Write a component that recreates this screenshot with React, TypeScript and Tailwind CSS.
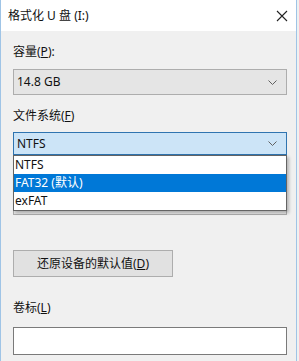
import React from 'react'

const FONT = '[font-family:"Noto_Sans","Noto_Sans_CJK_SC",sans-serif]'

function Chevron({ className }: { className?: string }) {
  return (
    <svg width="9" height="5" viewBox="0 0 9 5" className={className} fill="none">
      <path d="M0.5 0.5 L4.5 4.5 L8.5 0.5" stroke="currentColor" strokeWidth="1" />
    </svg>
  )
}

function Combo({ value, active }: { value: string; active?: boolean }) {
  return (
    <div
      className={
        active
          ? 'flex h-[23px] items-center justify-between border border-[#2f74b0] bg-[#cce4f7] pl-[3px] pr-[9px]'
          : 'flex h-[26px] items-center justify-between border border-[#adadad] bg-[#e5e5e5] pl-[3px] pr-[9px]'
      }
    >
      <span className="text-[12px] leading-none text-[#111]">{value}</span>
      <Chevron className="text-[#606060]" />
    </div>
  )
}

const OPTIONS = ['NTFS', 'FAT32 (默认)', 'exFAT']

export default function App() {
  return (
    <div className={`${FONT} relative h-[361px] w-[299px] overflow-hidden bg-[#f0f0f0]`}>
      <div className="mr-[2px] h-full border-l border-r border-[#9fc4e6]">
        {/* Title bar */}
        <div className="flex h-[31px] items-center justify-between bg-white pl-[7px] pr-[8px]">
          <span className="text-[12px] text-[#111]">格式化 U 盘 (I:)</span>
          <svg width="12" height="12" viewBox="0 0 12 12" className="text-[#222]">
            <path d="M1 1 L11 11 M11 1 L1 11" stroke="currentColor" strokeWidth="1.1" />
          </svg>
        </div>

        <div className="flex w-[286px] flex-col pl-[12px] text-[12px] text-[#111]">
          <span className="mt-[13px] leading-[16px]">
            容量(<span className="underline">P</span>):
          </span>
          <div className="mt-[9px]">
            <Combo value="14.8 GB" />
          </div>

          <span className="mt-[13px] leading-[16px]">
            文件系统(<span className="underline">F</span>)
          </span>
          <div className="relative z-10 mt-[8px]">
            <Combo value="NTFS" active />
            {/* Open dropdown list */}
            <div className="absolute left-0 right-0 top-full border border-[#646464] bg-white shadow-[2px_2px_3px_rgba(0,0,0,0.25)]">
              {OPTIONS.map((opt) => (
                <div
                  key={opt}
                  className={
                    opt.startsWith('FAT32')
                      ? 'flex h-[18px] items-center bg-[#0078d7] pl-[1px] text-white'
                      : 'flex h-[18px] items-center pl-[1px] text-[#111]'
                  }
                >
                  {opt}
                </div>
              ))}
            </div>
          </div>

          {/* Allocation unit row, covered by the open list */}
          <div className="mt-[13px] h-[16px]" />
          <div className="mt-[8px] h-[23px] border border-[#adadad] bg-[#e5e5e5]" />

          <div className="mt-[35px] flex h-[27px] w-[160px] items-center justify-center border border-[#adadad] bg-[#e1e1e1]">
            还原设备的默认值(<span className="underline">D</span>)
          </div>

          <span className="mt-[23px] leading-[16px]">
            卷标(<span className="underline">L</span>)
          </span>
          <div className="mt-[11px] h-[28px] border border-[#7a7a7a] bg-white" />
        </div>
      </div>
    </div>
  )
}
